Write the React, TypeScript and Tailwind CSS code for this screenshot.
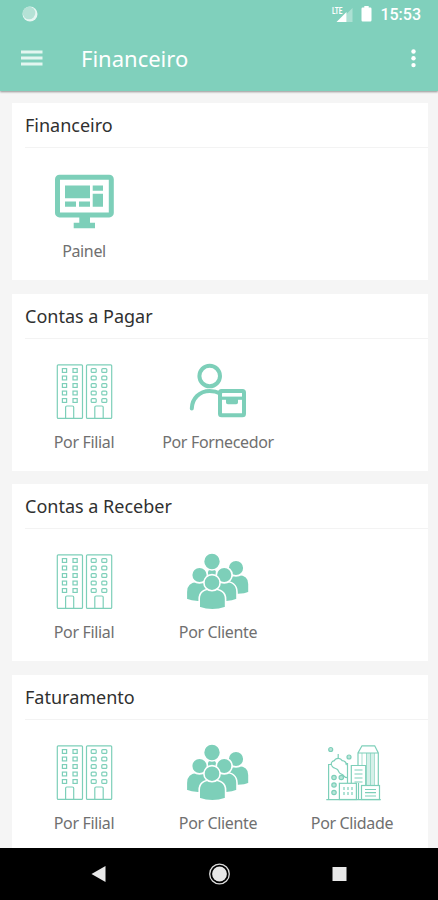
import type { ReactNode } from 'react';

const MINT = '#7dcfb9';

function PanelIcon() {
  return (
    <svg width="64" height="64" viewBox="0 0 64 64" fill={MINT}>
      <rect x="5.5" y="8.3" width="53.8" height="37.6" rx="2" fill="none" stroke={MINT} strokeWidth="5" />
      <path d="M13 16.5h25v12.7H13zM13 32.5h11v5.3H13zM27 32.5h11v5.3H27zM40.7 16.5H51v5.3H40.7zM40.7 24.8H51v13H40.7z" />
      <path d="M27.3 47.5H38v6.3h5v5.4H21.7v-5.4h5.6z" />
    </svg>
  );
}

const WINDOW_ROWS = [8.6, 16.1, 23.6, 31.1, 38.6];

function BranchIcon() {
  return (
    <svg width="64" height="64" viewBox="0 0 64 64" fill="none" stroke={MINT} strokeWidth="1.2">
      <rect x="5.3" y="4.8" width="25.2" height="53.6" rx="1" />
      <rect x="34.5" y="4.8" width="25.2" height="53.6" rx="1" />
      <path d="M13.6 58.4V47.3q0-1.3 1.3-1.3h5.5q1.3 0 1.3 1.3v11.1M42.8 58.4V47.3q0-1.3 1.3-1.3h5.8q1.3 0 1.3 1.3v11.1" />
      {WINDOW_ROWS.map((y) => (
        <g key={y}>
          <rect x="10.4" y={y} width="4.2" height="3.8" />
          <rect x="21" y={y} width="4.2" height="3.8" />
          <rect x="39.2" y={y} width="5" height="3.8" rx="1" />
          <rect x="49.8" y={y} width="5" height="3.8" rx="1" />
        </g>
      ))}
    </svg>
  );
}

function SupplierIcon() {
  return (
    <svg width="64" height="64" viewBox="0 0 64 64" fill="none" stroke={MINT} strokeWidth="4">
      <circle cx="23.7" cy="16" r="10.3" />
      <path d="M5.8 48.5C6 38.5 13.5 31 23.7 31c4 0 7.3.8 10.5 2.6" strokeLinecap="round" />
      <rect x="34" y="31" width="24" height="24.2" rx="1.5" />
      <path d="M34 38.2h24" strokeWidth="3.2" />
      <path d="M40 39h12v3.5q0 1.8-1.8 1.8h-8.4q-1.8 0-1.8-1.8z" fill={MINT} stroke="none" />
    </svg>
  );
}

function CustomersIcon() {
  return (
    <svg width="64" height="64" viewBox="0 0 64 64" fill={MINT} stroke="#fff" strokeWidth="1.6">
      <path d="M20.5 28c0-5 1-8 2.5-9h6c1.5 1 2.5 4 2.5 9z" />
      <circle cx="26" cy="11.5" r="8.5" />
      <path d="M42 44V33c0-5 3.5-8.5 10.5-8.5S63 28 63 34v8.5c-3 1.5-7 2-11 2z" />
      <circle cx="50" cy="18" r="7.9" />
      <path d="M.3 49.5V42c0-7 4.5-10.5 11-10.5S24 34 24 42v9.7H12c-4 0-8-.5-11.7-2.2z" />
      <circle cx="13.5" cy="25" r="7.9" />
      <path d="M28 51.7V42c0-7 4-10.5 11-10.5S51 35 51 42v7.5c-4 2-7 2.2-11 2.2z" />
      <circle cx="38.2" cy="25" r="7.9" />
      <path d="M13.2 57.5V49c0-7 4.5-10 12.7-10s13.7 3 13.7 10v8.5c-8 2.7-18.4 2.7-26.4 0z" />
      <circle cx="26" cy="32.7" r="8.1" />
    </svg>
  );
}

function CityIcon() {
  return (
    <svg width="64" height="64" viewBox="0 0 64 64" fill="none" stroke={MINT} strokeWidth="1.2">
      <circle cx="10.7" cy="8.5" r="2" fill="#b9e5d9" />
      <circle cx="29" cy="16" r="2" fill="#b9e5d9" />
      <path d="M18.2 13v4.5M8.6 58.5V23.5h3M26 22.5h1.5V42" />
      <path d="M11.4 24.2c-.6-2.7 1-4.3 3-4.6.6-1.6 2-2.3 3.8-2.3s3.2.8 4 2.3c2.6.2 4.3 2 4 4.5M11.4 24.2c1.6 3.3 4.6 3 6 4.3s1 3.5 3.3 4.3 2.6 1.2 3.5 2.5 1.8 1.4 3.3 1.4" />
      {[36.5, 44, 51.5].map((y) => (
        <circle key={y} cx="14" cy={y} r="2.2" fill="#b9e5d9" />
      ))}
      <circle cx="21.3" cy="36.5" r="2.2" fill="#b9e5d9" />
      <path d="M46 12h8v32h-8z" fill="#d5f0e9" stroke="none" />
      <path d="M38 24V12l4-7.2h12.7L58.3 12v32M38 12h20.3" />
      <path d="M42 12v12M46.5 12v32M50.5 12v32M54.5 12v32" strokeWidth="1" opacity=".65" />
      <path d="M31.3 42V24.5h14.4v20M34.5 29h8M34.5 33h8M34.5 37h8M34.5 41h8M38.5 42v16" />
      <rect x="19.4" y="42.3" width="17" height="16.2" fill="#fff" />
      <path d="M24 46v3M28 46v3M32 46v3M24 51v3M28 51v3M32 51v3" />
      <rect x="41.5" y="44.5" width="18" height="14" fill="#fff" />
      <path d="M45 48.5h11M45 51.7h11M45 55h11M6.3 58.7h54.5" />
    </svg>
  );
}

interface Item {
  label: string;
  icon: ReactNode;
}

const sections: { title: string; items: Item[] }[] = [
  { title: 'Financeiro', items: [{ label: 'Painel', icon: <PanelIcon /> }] },
  {
    title: 'Contas a Pagar',
    items: [
      { label: 'Por Filial', icon: <BranchIcon /> },
      { label: 'Por Fornecedor', icon: <SupplierIcon /> },
    ],
  },
  {
    title: 'Contas a Receber',
    items: [
      { label: 'Por Filial', icon: <BranchIcon /> },
      { label: 'Por Cliente', icon: <CustomersIcon /> },
    ],
  },
  {
    title: 'Faturamento',
    items: [
      { label: 'Por Filial', icon: <BranchIcon /> },
      { label: 'Por Cliente', icon: <CustomersIcon /> },
      { label: 'Por Clidade', icon: <CityIcon /> },
    ],
  },
];

function StatusBar() {
  return (
    <div className="flex h-7 items-center pl-[22px] pr-[17px]">
      <svg width="16" height="16" viewBox="0 0 16 16">
        <circle cx="8" cy="8" r="7.5" fill="#fff" opacity=".8" />
        <circle cx="7" cy="7" r="6.3" fill="#b5e2d6" />
      </svg>
      <div className="ml-auto flex items-center">
        <svg width="23" height="18" viewBox="0 0 23 18" fill="#fff">
          <path d="M21.5 3v14h-6V9z" opacity=".35" />
          <path d="M5.5 17 15.5 7v10z" />
          <text x="1" y="8.7" fontSize="9.5" fontWeight="700" fontFamily="Roboto, sans-serif" textLength="10.5" lengthAdjust="spacingAndGlyphs">
            LTE
          </text>
        </svg>
        <svg className="ml-[7px]" width="11" height="18" viewBox="0 0 11 18" fill="#fff">
          <path d="M3.3 1h4.4v1.6h1.6q1.2 0 1.2 1.2v11.4q0 1.3-1.2 1.3H1.7Q.5 16.5.5 15.2V3.8q0-1.2 1.2-1.2h1.6z" />
        </svg>
        <span className="mt-px ml-2 font-[Roboto] text-base leading-none font-medium">15:53</span>
      </div>
    </div>
  );
}

function Header() {
  return (
    <header className="relative z-10 h-[91px] flex-none bg-[#80d0bc] text-white shadow-[0_1px_2px_rgba(0,0,0,0.4)]">
      <StatusBar />
      <div className="flex h-[60px] items-center pl-[21px] pr-[20px]">
        <svg width="22" height="16" viewBox="0 0 22 16" stroke="#e3f6f0" strokeWidth="2.8">
          <path d="M0 2h21.5M0 8h21.5M0 14h21.5" />
        </svg>
        <h1 className="ml-[38px] text-[22px] leading-none">Financeiro</h1>
        <svg className="ml-auto" width="10" height="20" viewBox="0 0 10 20" fill="#fff">
          <circle cx="5.5" cy="3.5" r="2.2" />
          <circle cx="5.5" cy="10.3" r="2.2" />
          <circle cx="5.5" cy="17.1" r="2.2" />
        </svg>
      </div>
    </header>
  );
}

function SectionCard({ title, items }: { title: string; items: Item[] }) {
  return (
    <section className="h-[177px] flex-none bg-white">
      <h2 className="ml-[13px] h-[45px] border-b border-[#f3f3f3] text-lg leading-[45px] text-[#303030]">{title}</h2>
      <div className="grid grid-cols-[134px_134px_134px] pt-[21px] pl-[5px]">
        {items.map((item) => (
          <div key={item.label} className="flex flex-col items-center">
            {item.icon}
            <span className="mt-1.5 text-base leading-6 tracking-[-0.35px] whitespace-nowrap text-[#707070]">{item.label}</span>
          </div>
        ))}
      </div>
    </section>
  );
}

function NavBar() {
  return (
    <nav className="flex h-[52px] flex-none items-center justify-between bg-black px-[91px]">
      <svg width="16" height="24" viewBox="0 0 16 24" fill="#e8e8e8">
        <path d="M.5 12 14.5 4v16z" />
      </svg>
      <svg width="24" height="24" viewBox="0 0 24 24">
        <circle cx="11.5" cy="12" r="9.8" fill="none" stroke="#ddd" strokeWidth="1.3" />
        <circle cx="11.5" cy="12" r="7.4" fill="#e8e8e8" />
      </svg>
      <svg width="15" height="24" viewBox="0 0 15 24" fill="#e8e8e8">
        <rect x=".5" y="5" width="14" height="14" />
      </svg>
    </nav>
  );
}

export default function App() {
  return (
    <div className="flex h-[900px] w-[438px] flex-col overflow-hidden bg-[#f5f5f5] font-['Noto_Sans',sans-serif]">
      <Header />
      <main className="flex min-h-0 flex-1 flex-col gap-[13.6px] overflow-hidden pt-3 pr-2.5 pl-3">
        {sections.map((section) => (
          <SectionCard key={section.title} title={section.title} items={section.items} />
        ))}
      </main>
      <NavBar />
    </div>
  );
}
